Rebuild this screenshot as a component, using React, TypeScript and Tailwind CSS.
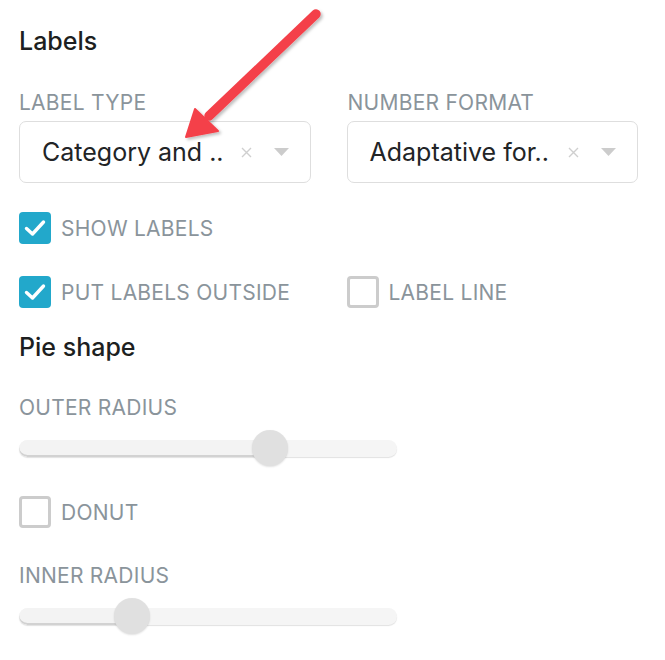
import React from 'react';

function Checkbox({ checked, label }: { checked?: boolean; label: string }) {
  return (
    <div className="flex items-center h-8">
      {checked ? (
        <span className="w-8 h-8 rounded-[4px] bg-[#22a8cb] flex items-center justify-center">
          <svg width="22" height="18" viewBox="0 0 22 18" fill="none">
            <path d="M2.5 9.5 L8.5 15 L19.5 3" stroke="white" strokeWidth="3.4" strokeLinecap="round" strokeLinejoin="round" />
          </svg>
        </span>
      ) : (
        <span className="w-8 h-8 rounded-[4px] border-[3px] border-[#cccccc] bg-white" />
      )}
      <span className="ml-[10px] text-[21px] leading-none tracking-[0.25px] text-[#8a949b]">{label}</span>
    </div>
  );
}

function Select({ value }: { value: string }) {
  return (
    <div className="h-[62px] border border-[#dedede] rounded-[7px] bg-white flex items-center pl-[22px] pr-[21px]">
      <span className="flex-1 text-[25px] leading-none text-[#222426] whitespace-nowrap">{value}</span>
      <svg width="11" height="11" viewBox="0 0 11 11">
        <path d="M1 1 L10 10 M10 1 L1 10" stroke="#cfcfcf" strokeWidth="1.4" />
      </svg>
      <svg className="ml-[22px]" width="15" height="8" viewBox="0 0 15 8">
        <path d="M0 0 H15 L7.5 8 Z" fill="#cccccc" />
      </svg>
    </div>
  );
}

function Slider({ pct }: { pct: number }) {
  return (
    <div className="relative w-[378px] h-9 flex items-center">
      <div className="w-full h-[17px] rounded-full bg-[#f5f5f5] shadow-[0_1px_1px_rgba(0,0,0,0.12)] overflow-hidden">
        <div className="h-full rounded-l-full bg-[#f3f3f3] shadow-[inset_0_-2px_0_#d2d2d2]" style={{ width: `${pct}%` }} />
      </div>
      <div
        className="absolute top-0 w-9 h-9 -ml-[18px] rounded-full bg-[#e0e0e0] shadow-[0_1px_2px_rgba(0,0,0,0.12)]"
        style={{ left: `${pct}%` }}
      />
    </div>
  );
}

function Label({ children }: { children: React.ReactNode }) {
  return <div className="text-[21px] leading-none tracking-[0.25px] text-[#8a949b]">{children}</div>;
}

export default function App() {
  return (
    <div className="relative w-[665px] h-[660px] bg-white font-['Inter',sans-serif]">
      <div className="flex flex-col pl-[19px] pr-[27px] pt-[29px]">
        <h2 className="text-[25px] leading-none font-medium text-[#1d1f21]">Labels</h2>

        <div className="grid grid-cols-2 gap-x-9 mt-[38px]">
          <div>
            <Label>LABEL TYPE</Label>
            <div className="mt-2">
              <Select value="Category and .." />
            </div>
          </div>
          <div>
            <div className="pl-px">
              <Label>NUMBER FORMAT</Label>
            </div>
            <div className="mt-2">
              <Select value="Adaptative for.." />
            </div>
          </div>
        </div>

        <div className="mt-[29px]">
          <Checkbox checked label="SHOW LABELS" />
        </div>
        <div className="grid grid-cols-2 gap-x-9 mt-8">
          <Checkbox checked label="PUT LABELS OUTSIDE" />
          <Checkbox label="LABEL LINE" />
        </div>

        <h2 className="mt-[27px] text-[25px] leading-none font-medium text-[#1d1f21]">Pie shape</h2>

        <div className="mt-[37px]">
          <Label>OUTER RADIUS</Label>
        </div>
        <div className="mt-3">
          <Slider pct={66.4} />
        </div>

        <div className="mt-[30px]">
          <Checkbox label="DONUT" />
        </div>

        <div className="mt-[37px]">
          <Label>INNER RADIUS</Label>
        </div>
        <div className="mt-3">
          <Slider pct={29.9} />
        </div>
      </div>

      {/* annotation arrow */}
      <svg className="absolute left-0 top-0 pointer-events-none" width="665" height="660">
        <defs>
          <filter id="sh" x="-20%" y="-20%" width="140%" height="140%">
            <feDropShadow dx="2" dy="2" stdDeviation="1.5" floodColor="#000" floodOpacity="0.25" />
          </filter>
        </defs>
        <g filter="url(#sh)">
          <line x1="316" y1="14" x2="209" y2="116" stroke="#f4414a" strokeWidth="9.5" strokeLinecap="round" />
          <path d="M186 137 L195 109 L218 131 Z" fill="#f4414a" stroke="#f4414a" strokeWidth="2" strokeLinejoin="round" />
        </g>
      </svg>
    </div>
  );
}
